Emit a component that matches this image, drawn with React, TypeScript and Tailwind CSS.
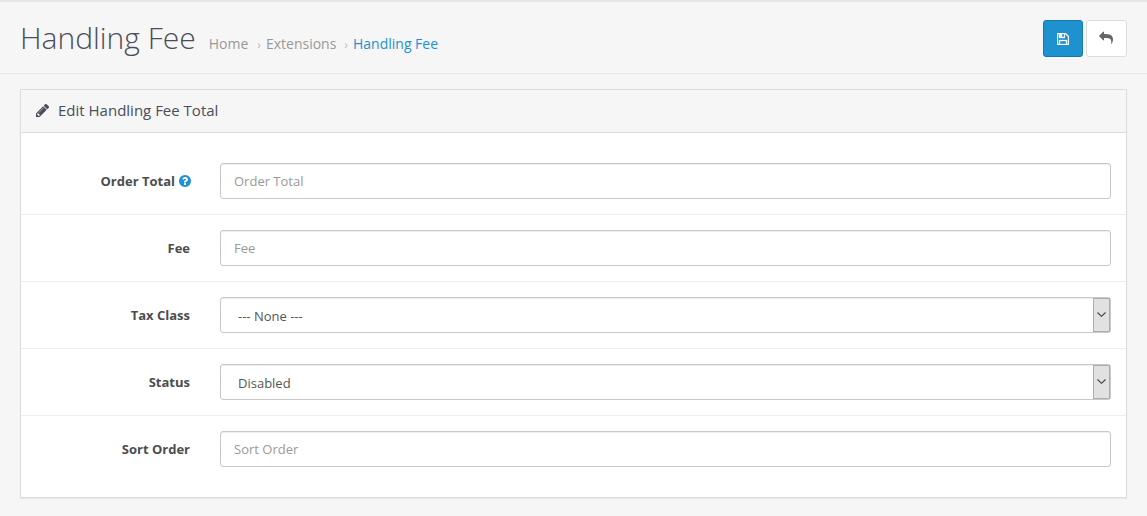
import React from "react";

type IconProps = { className?: string };

const SaveIcon = ({ className }: IconProps) => (
  <svg viewBox="0 128 1536 1536" className={className} fill="currentColor" stroke="currentColor" strokeWidth="40">
    <path
      fillRule="evenodd"
      d="M384 1536h768v-384h-768v384zM1280 1536h128v-896q0-14-10-38.5t-20-34.5l-281-281q-10-10-34-20t-39-10v416q0 40-28 68t-68 28h-576q-40 0-68-28t-28-68v-416h-128v1280h128v-416q0-40 28-68t68-28h832q40 0 68 28t28 68v416zM896 608v-320q0-13-9.5-22.5t-22.5-9.5h-192q-13 0-22.5 9.5t-9.5 22.5v320q0 13 9.5 22.5t22.5 9.5h192q13 0 22.5-9.5t9.5-22.5zM1536 640v928q0 40-28 68t-68 28h-1344q-40 0-68-28t-28-68v-1344q0-40 28-68t68-28h928q40 0 88 20t76 48l280 280q28 28 48 76t20 88z"
    />
  </svg>
);

const ReplyIcon = ({ className }: IconProps) => (
  <svg viewBox="0 0 1792 1792" className={className} fill="currentColor">
    <path
      transform="translate(1792 0) scale(-1 1)"
      d="M1792 640q0 26-19 45l-512 512q-19 19-45 19t-45-19-19-45v-256h-224q-98 0-175.5 6t-154 21.5-133 42.5-105.5 69.5-80 101-48.5 138.5-17.5 181q0 55 5 123 0 6 2.5 23.5t2.5 26.5q0 15-8.5 25t-23.5 10q-16 0-28-17-7-9-13-22t-13.5-30-10.5-24q-127-285-127-451 0-199 53-333 162-403 875-403h224v-256q0-26 19-45t45-19 45 19l512 512q19 19 19 45z"
    />
  </svg>
);

const PencilIcon = ({ className }: IconProps) => (
  <svg viewBox="128 149 1515 1515" className={className} fill="currentColor">
    <path d="M491 1536l91-91-235-235-91 91v107h128v128h107zm523-928q0-22-22-22-10 0-17 7l-542 542q-7 7-7 17 0 22 22 22 10 0 17-7l542-542q7-7 7-17zm-54-192l416 416-832 832h-416v-416zm683 96q0 53-37 90l-166 166-416-416 166-165q36-38 90-38 53 0 91 38l235 234q37 39 37 91z" />
  </svg>
);

const HelpIcon = ({ className }: IconProps) => (
  <svg viewBox="128 128 1536 1536" className={className} fill="currentColor">
    <path d="M1024 1376v-192q0-14-9-23t-23-9h-192q-14 0-23 9t-9 23v192q0 14 9 23t23 9h192q14 0 23-9t9-23zm256-672q0-88-55.5-163t-138.5-116-170-41q-243 0-371 213-15 24 8 42l132 100q7 6 19 6 16 0 25-12 53-68 86-92 34-24 86-24 48 0 85.5 26t37.5 59q0 38-20 61t-68 45q-63 28-115.5 86.5t-52.5 125.5v36q0 14 9 23t23 9h192q14 0 23-9t9-23q0-19 21.5-49.5t54.5-49.5q32-18 49-28.5t46-35 44.5-48 28-60.5 12.5-81zm384 192q0 209-103 385.5t-279.5 279.5-385.5 103-385.5-103-279.5-279.5-103-385.5 103-385.5 279.5-279.5 385.5-103 385.5 103 279.5 279.5 103 385.5z" />
  </svg>
);

const fieldBox =
  "block h-9 w-full rounded-[3px] border border-[#c8c8c8] bg-white text-[13px] text-[#555] shadow-[inset_0_1px_1px_rgba(0,0,0,0.075)] outline-none";

function Row({
  label,
  help,
  last,
  children,
}: {
  label: string;
  help?: boolean;
  last?: boolean;
  children: React.ReactNode;
}) {
  return (
    <div className={`flex items-center py-[15px] pr-[15px] ${last ? "" : "border-b border-[#ededed]"}`}>
      <label className="flex w-[199px] shrink-0 items-center justify-end pt-[2px] pr-[30px] text-[13px] font-bold text-[#4c4d4f]">
        {label}
        {help && <HelpIcon className="-mr-px mb-[2px] ml-1 size-3 text-[#1e91cf]" />}
      </label>
      <div className="min-w-0 flex-1">{children}</div>
    </div>
  );
}

function TextField({ placeholder }: { placeholder: string }) {
  return <input className={`${fieldBox} px-[13px] placeholder:text-[#999]`} placeholder={placeholder} />;
}

function SelectField({ options }: { options: string[] }) {
  return (
    <div className="relative">
      <select className={`${fieldBox} appearance-none pt-[3px] pr-8 pl-[17px]`}>
        {options.map((o) => (
          <option key={o}>{o}</option>
        ))}
      </select>
      <span className="pointer-events-none absolute top-px right-px flex h-[34px] w-[17px] items-center justify-center border border-[#adadad] bg-[#e1e1e1] pr-px pb-px">
        <svg viewBox="0 0 9 5" className="h-[5px] w-[9px]" fill="none" stroke="#404040" strokeWidth="1.1">
          <path d="M0.5 0.5l4 3.8 4-3.8" />
        </svg>
      </span>
    </div>
  );
}

export default function App() {
  return (
    <div className="min-h-[516px] border-t-2 border-[#e7e7e7] bg-[#f6f6f6] font-['Open_Sans',sans-serif] text-[#666]">
      <header className="flex h-[72px] items-start justify-between border-b border-[#e7e7e7] px-5 pt-[18px]">
        <div className="-mt-px flex items-baseline">
          <h1 className="text-[30px] leading-[37px] font-light text-[#4c4d5a]">Handling Fee</h1>
          <nav className="ml-[13px] flex items-baseline text-sm text-[#999]">
            <a>Home</a>
            <span className="mr-[5px] ml-[9px] text-xs text-[#bbb]">›</span>
            <a>Extensions</a>
            <span className="mr-[5px] ml-2 text-xs text-[#bbb]">›</span>
            <a className="text-[#1e91cf]">Handling Fee</a>
          </nav>
        </div>
        <div className="flex gap-[3px]">
          <button className="flex h-[37px] w-10 items-center justify-center rounded-[3px] border border-[#1978ab] bg-[#1e91cf] text-white">
            <SaveIcon className="size-3" />
          </button>
          <button className="flex h-[37px] w-[41px] items-center justify-center rounded-[3px] border border-[#ddd] bg-white pr-px pb-px text-[#666]">
            <ReplyIcon className="size-[14px]" />
          </button>
        </div>
      </header>
      <main className="px-5 pt-[15px]">
        <section className="border border-[#dcdcdc] bg-white shadow-[0_1px_1px_rgba(0,0,0,0.05)]">
          <div className="flex h-[43px] items-center border-b border-[#dcdcdc] bg-[#f6f6f6] pb-px pl-[15px] text-[15px] text-[#4c4d5a]">
            <PencilIcon className="mr-[9px] size-[13px]" />
            <h3>Edit Handling Fee Total</h3>
          </div>
          <div className="py-[15px]">
            <Row label="Order Total" help>
              <TextField placeholder="Order Total" />
            </Row>
            <Row label="Fee">
              <TextField placeholder="Fee" />
            </Row>
            <Row label="Tax Class">
              <SelectField options={["--- None ---", "Taxable Goods"]} />
            </Row>
            <Row label="Status">
              <SelectField options={["Disabled", "Enabled"]} />
            </Row>
            <Row label="Sort Order" last>
              <TextField placeholder="Sort Order" />
            </Row>
          </div>
        </section>
      </main>
    </div>
  );
}
